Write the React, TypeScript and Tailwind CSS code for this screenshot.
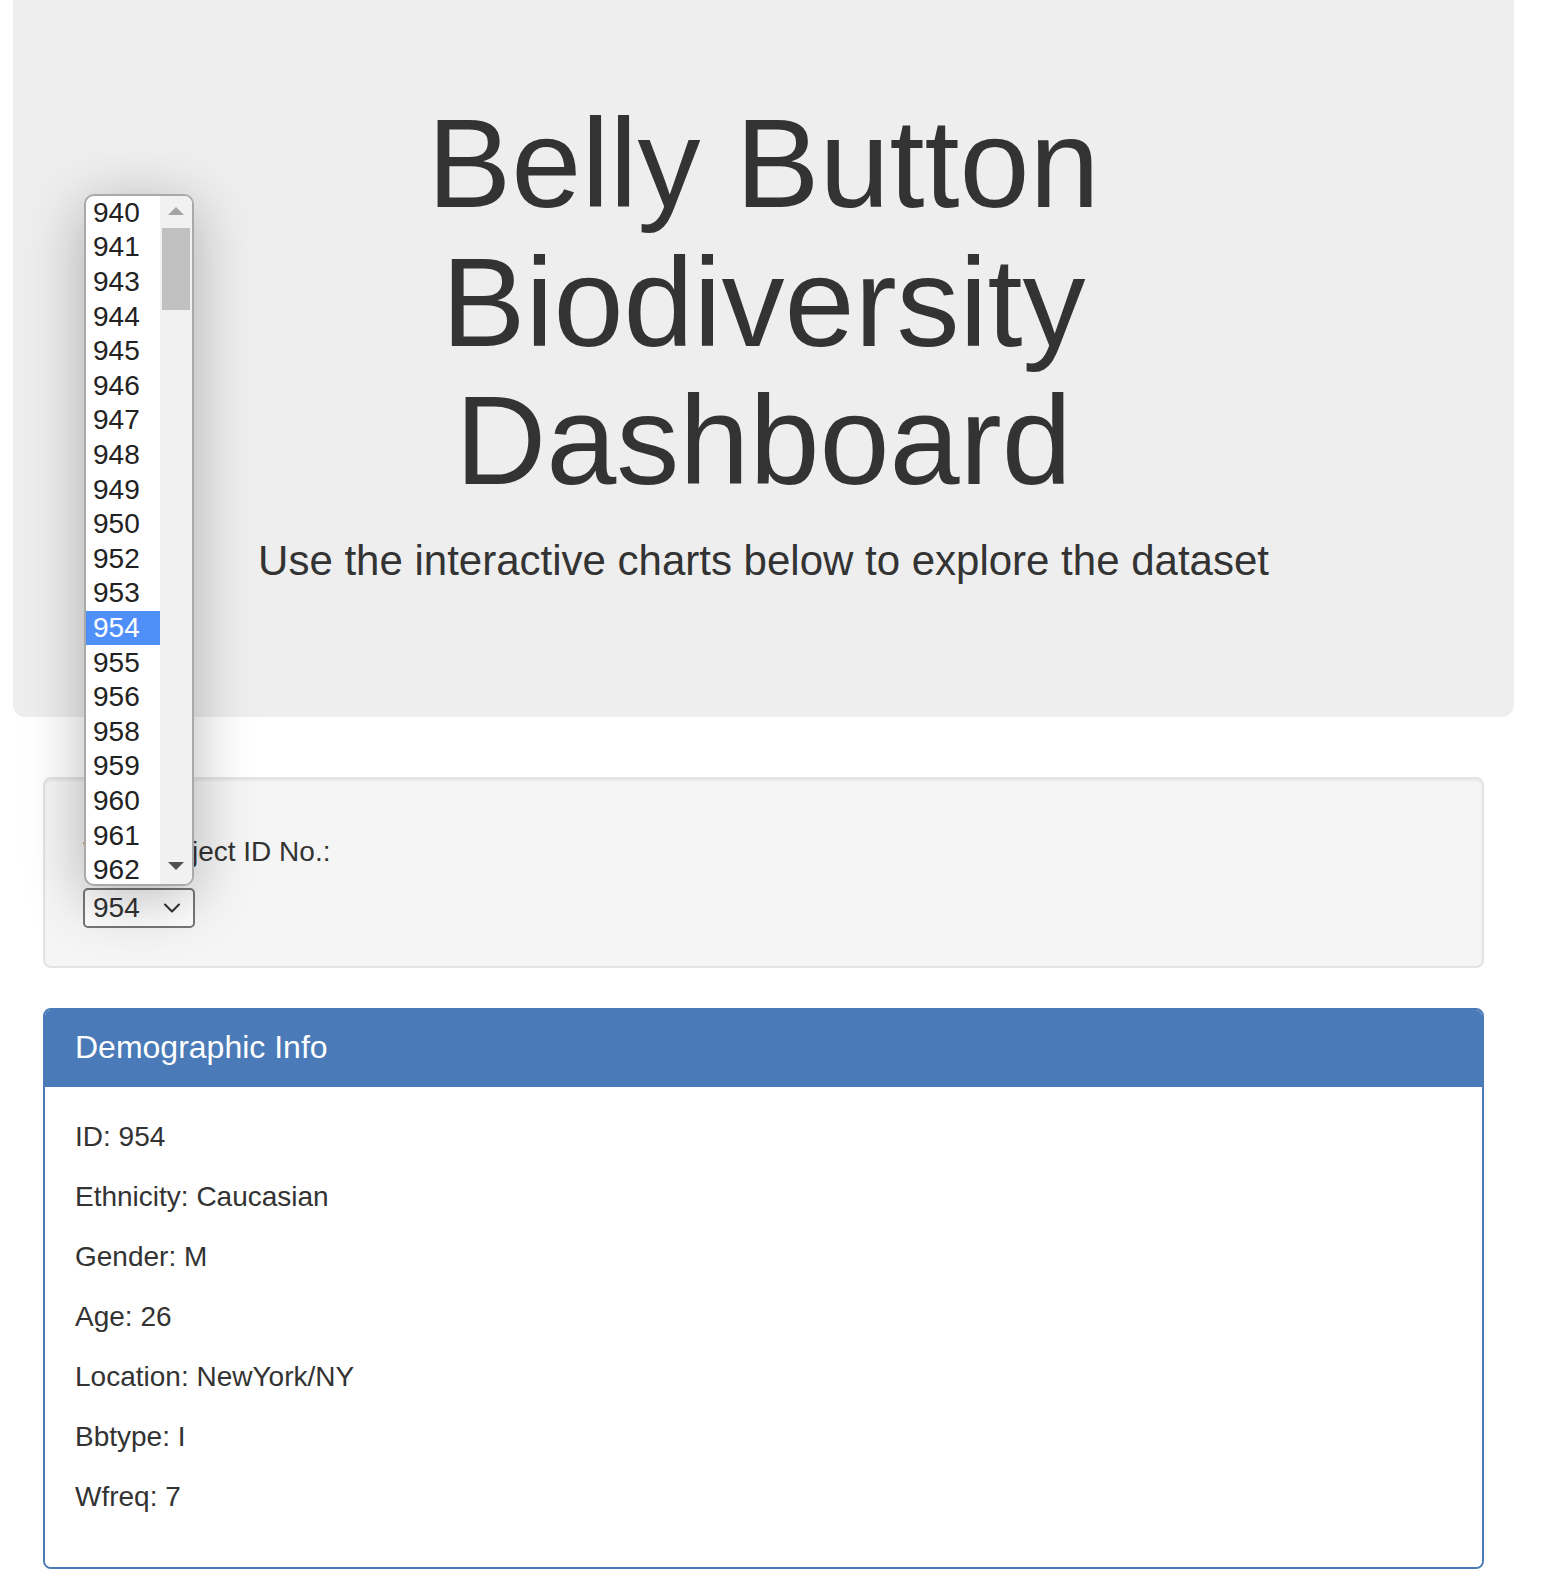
import { ChevronDown } from "lucide-react";

const subjectIds = [
  940, 941, 943, 944, 945, 946, 947, 948, 949, 950, 952, 953, 954, 955, 956,
  958, 959, 960, 961, 962,
];

const demographics = [
  ["ID", "954"],
  ["Ethnicity", "Caucasian"],
  ["Gender", "M"],
  ["Age", "26"],
  ["Location", "NewYork/NY"],
  ["Bbtype", "I"],
  ["Wfreq", "7"],
];

export default function App() {
  const selected = 954;

  return (
    <div className="min-h-screen bg-white font-['Liberation_Sans',Arial,sans-serif] text-[#333]">
      <div className="ml-[13px] w-[1501px]">
        {/* Header */}
        <div className="bg-[#eeeeee] rounded-b-[12px] px-[120px] pt-[95px] pb-[96px] mb-[60px] text-center">
          <h1 className="text-[126px] leading-[1.1] font-normal mb-[20px]">
            Belly Button Biodiversity Dashboard
          </h1>
          <p className="text-[42px] leading-[60px] mb-[30px]">
            Use the interactive charts below to explore the dataset
          </p>
        </div>

        <div className="mx-[30px]">
          {/* Subject select */}
          <div className="bg-[#f5f5f5] border-2 border-[#e3e3e3] rounded-[8px] p-[38px] mb-[40px] shadow-[inset_0_2px_2px_rgba(0,0,0,0.05)]">
            <h5 className="text-[28px] leading-[1.1] my-[20px]">
              Test Subject ID No.:
            </h5>
            <div className="relative w-[112px]">
              <div className="h-[40px] w-[112px] border-2 border-[#767676] rounded-[5px] bg-white flex items-center justify-between pl-[8px] pr-[7px] text-[28px] leading-none">
                <span>{selected}</span>
                <ChevronDown className="w-[28px] h-[28px] text-[#333]" strokeWidth={1.8} />
              </div>

              {/* Open option list */}
              <div className="absolute left-[1px] bottom-[calc(100%+2px)] w-[110px] h-[692px] bg-white border-2 border-[#a9a9a9] rounded-[10px] overflow-hidden flex shadow-[0_12px_60px_rgba(0,0,0,0.28)]">
                <div className="flex-1 flex flex-col">
                  {subjectIds.map((id) => (
                    <div
                      key={id}
                      className={
                        id === selected
                          ? "h-[34.6px] shrink-0 flex items-center pl-[7px] text-[28px] leading-none bg-[#4f8ffa] text-white"
                          : "h-[34.6px] shrink-0 flex items-center pl-[7px] text-[28px] leading-none text-[#222]"
                      }
                    >
                      {id}
                    </div>
                  ))}
                </div>
                <div className="w-[32px] bg-[#f1f1f1] flex flex-col items-center">
                  <div className="mt-[11px] w-0 h-0 border-l-[8px] border-r-[8px] border-b-[8px] border-l-transparent border-r-transparent border-b-[#a3a3a3]" />
                  <div className="mt-[13px] w-[28px] h-[82px] bg-[#c1c1c1]" />
                  <div className="mt-auto mb-[14px] w-0 h-0 border-l-[8px] border-r-[8px] border-t-[8px] border-l-transparent border-r-transparent border-t-[#505050]" />
                </div>
              </div>
            </div>
          </div>

          {/* Demographic panel */}
          <div className="border-2 border-[#4a7ab7] rounded-[8px] overflow-hidden mb-[40px]">
            <div className="bg-[#4a7ab7] px-[30px] pt-[20px] pb-[22px]">
              <h3 className="text-[32px] leading-[1.1] text-white">
                Demographic Info
              </h3>
            </div>
            <div className="p-[30px] bg-white">
              {demographics.map(([key, value]) => (
                <p key={key} className="text-[28px] leading-[40px] mb-[20px]">
                  {key}: {value}
                </p>
              ))}
            </div>
          </div>
        </div>
      </div>
    </div>
  );
}
